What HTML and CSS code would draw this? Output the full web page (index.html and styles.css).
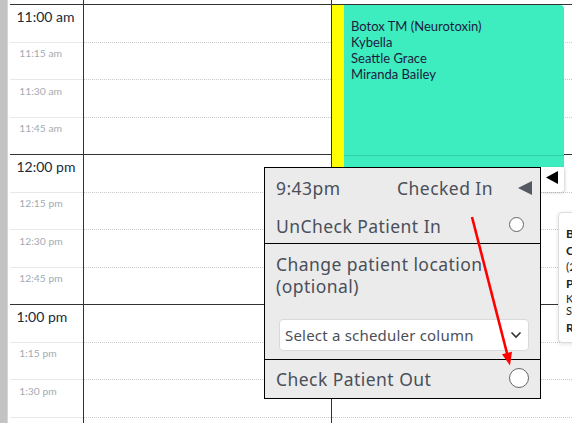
FILE: index.html
```
<!DOCTYPE html>
<html>
<head>
<meta charset="utf-8">
<link rel="stylesheet" href="styles.css">
</head>
<body>
<div class="page">
  <div class="strip"></div>
  <div class="cal">
    <div class="col time">
      <div class="lead"></div>
      <div class="slot hour"><span class="hl">11:00 am</span></div>
      <div class="slot q"><span class="ql">11:15 am</span></div>
      <div class="slot q"><span class="ql">11:30 am</span></div>
      <div class="slot q"><span class="ql">11:45 am</span></div>
      <div class="slot hour"><span class="hl">12:00 pm</span></div>
      <div class="slot q"><span class="ql">12:15 pm</span></div>
      <div class="slot q"><span class="ql">12:30 pm</span></div>
      <div class="slot q"><span class="ql">12:45 pm</span></div>
      <div class="slot hour"><span class="hl">1:00 pm</span></div>
      <div class="slot q"><span class="ql">1:15 pm</span></div>
      <div class="slot q"><span class="ql">1:30 pm</span></div>
      <div class="slot q"></div>
    </div>
    <div class="col day first">
      <div class="lead"></div>
      <div class="slot hour"></div><div class="slot q"></div><div class="slot q"></div><div class="slot q"></div>
      <div class="slot hour"></div><div class="slot q"></div><div class="slot q"></div><div class="slot q"></div>
      <div class="slot hour"></div><div class="slot q"></div><div class="slot q"></div><div class="slot q"></div>
    </div>
    <div class="col day second">
      <div class="lead"></div>
      <div class="slot hour"></div><div class="slot q"></div><div class="slot q"></div><div class="slot q"></div>
      <div class="slot hour"></div><div class="slot q"></div><div class="slot q"></div><div class="slot q"></div>
      <div class="slot hour"></div><div class="slot q"></div><div class="slot q"></div><div class="slot q"></div>
      <div class="appt">
        <div class="appt-bar"></div>
        <div class="appt-body">
          <div>Botox TM (Neurotoxin)</div>
          <div>Kybella</div>
          <div>Seattle Grace</div>
          <div>Miranda Bailey</div>
          <div class="appt-line"></div>
        </div>
      </div>
    </div>
  </div>

  <div class="tab">
    <svg width="14" height="15" viewBox="0 0 14 15"><polygon points="13,1 13,14 1,7.5" fill="#000"/></svg>
  </div>

  <div class="tip">
    <div class="b">Botox TM</div>
    <div class="b">Client</div>
    <div>(206) 555</div>
    <div class="b">Provider</div>
    <div class="s">Kybella</div>
    <div class="s">Seattle</div>
    <div class="b">Room</div>
  </div>

  <div class="popup">
    <div class="sec first-sec">
      <div class="row head">
        <span>9:43pm</span>
        <span class="status">Checked In
          <svg class="tri" width="16" height="16" viewBox="0 0 16 16"><polygon points="15,1 15,15 1,8" fill="#555962"/></svg>
        </span>
      </div>
      <div class="row act">
        <span>UnCheck Patient In</span>
        <span class="radio small"></span>
      </div>
    </div>
    <div class="sec loc">
      <div class="ttl">Change patient location</div>
      <div class="ttl">(optional)</div>
      <div class="select">
        <span>Select a scheduler column</span>
        <svg width="12" height="8" viewBox="0 0 12 8"><polyline points="1.5,1.5 6,6 10.5,1.5" fill="none" stroke="#333" stroke-width="1.6"/></svg>
      </div>
    </div>
    <div class="sec out">
      <span>Check Patient Out</span>
      <span class="radio big"></span>
    </div>
  </div>

  <svg class="arrow" width="572" height="423" viewBox="0 0 572 423">
    <line x1="472" y1="217" x2="507.2" y2="354" stroke="#ff0000" stroke-width="2.6"/>
    <polygon points="510,365.5 502,354.2 512,351.7" fill="#ff0000"/>
  </svg>
</div>
</body>
</html>
```

FILE: styles.css
```
* { box-sizing: border-box; }
html, body { margin: 0; padding: 0; }
body {
  font-family: "Lato", "Noto Sans", sans-serif;
  background: #fff;
  width: 572px;
  height: 423px;
  overflow: hidden;
}
.page {
  position: relative;
  display: flex;
  width: 572px;
  height: 423px;
  overflow: hidden;
}
.strip {
  width: 8px;
  background: #c3c3c3;
  border-right: 1px solid #d6d6d6;
  flex: none;
}
.cal {
  display: flex;
  margin-left: 2px;
  flex: 1;
}
.col {
  display: flex;
  flex-direction: column;
}
.lead { height: 4px; flex: none; }
.slot {
  height: 37.5px;
  flex: none;
}
.time {
  width: 74px;
  border-right: 1px solid #333;
}
.time .slot.hour { border-top: 1px solid #333; }
.time .slot.q { border-top: 1px solid #e8e8e8; }
.hl {
  display: block;
  font-size: 14px;
  line-height: 16px;
  padding: 4px 0 0 6.5px;
  color: #202a39;
}
.ql {
  display: block;
  font-size: 10.3px;
  line-height: 14px;
  padding: 3.5px 0 0 9.3px;
  color: #a3aab2;
}
.day .slot.hour { border-top: 1px solid #333; }
.day .slot.q { border-top: 1px dotted #c9c9c9; }
.day.first {
  width: 248px;
  border-right: 1px solid #333;
}
.day.second {
  flex: 1;
  position: relative;
}
.appt {
  position: absolute;
  top: 5px;
  left: 0;
  width: 232px;
  height: 162px;
  display: flex;
  background: #3decbf;
  border-top-right-radius: 4px;
  overflow: hidden;
}
.appt-bar {
  width: 12px;
  background: #ffff00;
  flex: none;
}
.appt-body {
  flex: 1;
  position: relative;
  padding: 13px 0 0 7px;
  font-size: 13px;
  line-height: 16px;
  color: #1d1b3e;
}
.appt-line {
  position: absolute;
  left: 0;
  right: 0;
  top: 150px;
  height: 1px;
  background: #2fd2a4;
}
.tab {
  position: absolute;
  left: 541px;
  top: 167px;
  width: 23px;
  height: 25px;
  background: #fff;
  border-bottom-right-radius: 3px;
  box-shadow: 1px 1px 3px rgba(0,0,0,0.18);
  display: flex;
  align-items: flex-start;
  padding: 3px 0 0 4px;
}
.tip {
  position: absolute;
  left: 558px;
  top: 212px;
  width: 120px;
  height: 131px;
  background: #fff;
  border: 1px solid #dcdcdc;
  border-radius: 4px;
  box-shadow: 0 1px 4px rgba(0,0,0,0.12);
  padding: 13px 0 0 7px;
  font-size: 12px;
  line-height: 16.5px;
  color: #222;
}
.tip .b { font-weight: 700; }
.tip .s { font-size: 11px; line-height: 10px; margin-top: 2px; }
.tip .s + .s { margin-bottom: 4px; }
.popup {
  position: absolute;
  left: 264px;
  top: 167px;
  width: 277px;
  height: 232px;
  background: #ebebeb;
  border: 1px solid #000;
  color: #4a4f59;
  font-family: "Noto Sans", "Lato", sans-serif;
  font-size: 17.5px;
  letter-spacing: 0.45px;
  display: flex;
  flex-direction: column;
}
.sec { padding: 0 11px; }
.first-sec {
  padding-top: 6px;
  height: 76px;
  border-bottom: 1px solid #000;
}
.row {
  display: flex;
  justify-content: space-between;
  align-items: center;
  height: 28px;
}
.row.act { margin-top: 10px; }
.status {
  display: flex;
  align-items: center;
}
.tri { margin-left: 24px; margin-right: -4px; }
.radio {
  display: block;
  border-radius: 50%;
  background: #fff;
  border: 1.3px solid #666;
}
.radio.small { width: 15px; height: 15px; margin-right: 5px; margin-top: -3px; }
.radio.big { width: 20px; height: 20px; margin-right: 0; margin-top: -2px; }
.loc {
  height: 116px;
  padding-top: 9px;
  border-bottom: 1px solid #000;
}
.ttl { line-height: 22px; }
.select {
  margin: 22px 0 0 3px;
  height: 32px;
  background: #fff;
  border: 1px solid #dadada;
  border-radius: 4px;
  display: flex;
  align-items: center;
  justify-content: space-between;
  padding: 0 6px 0 5px;
  font-size: 15px;
  letter-spacing: 0.2px;
  color: #4a4f59;
}
.out {
  flex: 1;
  display: flex;
  align-items: center;
  justify-content: space-between;
}
.arrow {
  position: absolute;
  left: 0;
  top: 0;
  pointer-events: none;
}
```
